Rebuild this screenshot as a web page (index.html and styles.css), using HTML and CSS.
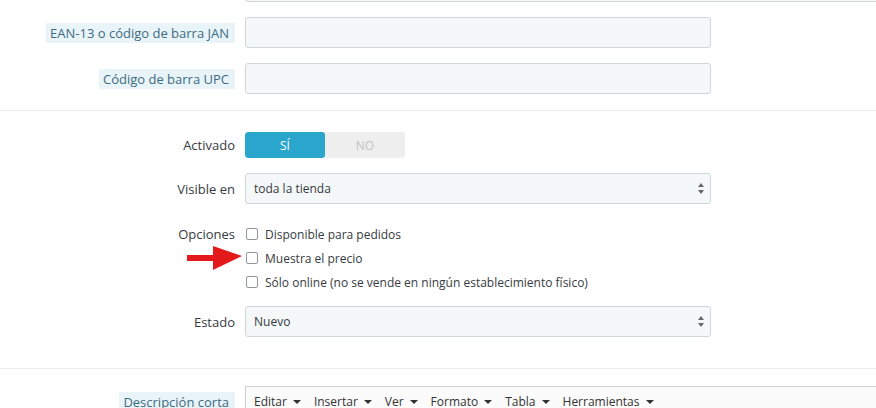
FILE: index.html
```html
<!DOCTYPE html>
<html lang="es">
<head>
<meta charset="utf-8">
<title>Producto</title>
<link rel="stylesheet" href="styles.css">
</head>
<body>
<div class="page">
  <section class="section section-first">
    <div class="row">
      <div class="label"></div>
      <div class="input input-wide"></div>
    </div>
    <div class="row">
      <div class="label"><span class="hint">EAN-13 o código de barra JAN</span></div>
      <div class="input"></div>
    </div>
    <div class="row">
      <div class="label"><span class="hint">Código de barra UPC</span></div>
      <div class="input"></div>
    </div>
  </section>

  <section class="section section-mid">
    <div class="row row-toggle">
      <div class="label">Activado</div>
      <div class="switch">
        <span class="switch-on">SÍ</span>
        <span class="switch-off">NO</span>
      </div>
    </div>
    <div class="row row-visible">
      <div class="label">Visible en</div>
      <div class="input select">
        <span class="select-text">toda la tienda</span>
        <svg class="select-arrows" width="6" height="11" viewBox="0 0 6 11"><path d="M3 0 L6 4 L0 4 Z M0 7 L6 7 L3 11 Z" fill="#666"/></svg>
      </div>
    </div>
    <div class="row row-options">
      <div class="label label-top">Opciones</div>
      <div class="checks">
        <label class="check"><span class="box"></span>Disponible para pedidos</label>
        <label class="check"><span class="box"></span>Muestra el precio</label>
        <label class="check"><span class="box"></span>Sólo online (no se vende en ningún establecimiento físico)</label>
      </div>
      <svg class="arrow" width="60" height="28" viewBox="0 0 60 28"><path d="M2 11 L28 11 L28 2 L57 12 L28 26 L28 17 L2 17 Z" fill="#e3191c"/></svg>
    </div>
    <div class="row">
      <div class="label">Estado</div>
      <div class="input select">
        <span class="select-text">Nuevo</span>
        <svg class="select-arrows" width="6" height="11" viewBox="0 0 6 11"><path d="M3 0 L6 4 L0 4 Z M0 7 L6 7 L3 11 Z" fill="#666"/></svg>
      </div>
    </div>
  </section>

  <section class="section section-last">
    <div class="row row-desc">
      <div class="label label-top"><span class="hint">Descripción corta</span></div>
      <div class="toolbar">
        <span class="menu">Editar<i class="caret"></i></span>
        <span class="menu">Insertar<i class="caret"></i></span>
        <span class="menu">Ver<i class="caret"></i></span>
        <span class="menu">Formato<i class="caret"></i></span>
        <span class="menu">Tabla<i class="caret"></i></span>
        <span class="menu">Herramientas<i class="caret"></i></span>
      </div>
    </div>
  </section>
</div>
</body>
</html>
```

FILE: styles.css
```css
html, body {
  margin: 0;
  padding: 0;
  background: #fff;
  overflow: hidden;
}
body {
  font-family: "Open Sans", "Liberation Sans", sans-serif;
  font-size: 12px;
  color: #363a41;
  width: 876px;
  height: 408px;
}
.page {
  margin-top: -29px;
}
.section {
  border-bottom: 1px solid #eaedef;
}
.section-first {
  padding-bottom: 1px;
}
.section-mid {
  padding-top: 21px;
  padding-bottom: 16px;
}
.section-last {
  border-bottom: none;
  padding-top: 17px;
}
.row {
  display: grid;
  grid-template-columns: 235px 466px;
  column-gap: 10px;
  align-items: center;
  margin-bottom: 15px;
  position: relative;
}
.label {
  text-align: right;
  color: #363a41;
  font-size: 13px;
  line-height: 20px;
}
.label-top {
  align-self: start;
}
.hint {
  display: inline-block;
  background: #e9f4f9;
  color: #3d6b82;
  padding: 0 6px 0 4px;
  line-height: 20px;
}
.input {
  height: 29px;
  border: 1px solid #cfd6d9;
  border-radius: 3px;
  background: #f5f8f9;
  box-sizing: content-box;
}
.input-wide {
  width: 660px;
}
.select {
  display: flex;
  align-items: center;
  justify-content: space-between;
  padding: 0 6px 0 8px;
  height: 29px;
  width: auto;
}
.select-text {
  color: #363a41;
}
.select-arrows {
  display: block;
}
.row-toggle {
  margin-bottom: 15px;
}
.switch {
  display: flex;
  width: 160px;
  height: 26px;
  border-radius: 3px;
  overflow: hidden;
}
.switch-on, .switch-off {
  flex: 1;
  display: flex;
  align-items: center;
  justify-content: center;
  font-size: 12px;
}
.switch-on {
  background: #2aa5cc;
  color: #fff;
  border-radius: 3px;
}
.switch-off {
  background: #eeeeee;
  color: #c4c4c4;
}
.row-visible {
  margin-bottom: 18px;
}
.row-options {
  margin-bottom: 12px;
}
.row-options .label {
  line-height: 24px;
}
.checks {
  display: flex;
  flex-direction: column;
}
.check {
  display: flex;
  align-items: center;
  height: 24px;
  padding-left: 1px;
}
.box {
  width: 10px;
  height: 10px;
  border: 1px solid #8f9599;
  border-radius: 2px;
  background: #fff;
  margin-right: 7px;
}
.arrow {
  position: absolute;
  left: 185px;
  top: 22px;
}
.row-desc {
  grid-template-columns: 235px 1fr;
}
.row-desc .label {
  padding-top: 6px;
}
.toolbar {
  border-top: 1px solid #cfcfcf;
  border-left: 1px solid #cfcfcf;
  background: #fbfbfb;
  height: 40px;
  padding: 6px 0 0 8px;
  display: flex;
  align-items: flex-start;
  margin-right: -10px;
  color: #333;
}
.menu {
  display: inline-flex;
  align-items: center;
  line-height: 18px;
  margin-right: 13px;
}
.caret {
  display: inline-block;
  width: 0;
  height: 0;
  border-left: 4px solid transparent;
  border-right: 4px solid transparent;
  border-top: 4px solid #333;
  margin-left: 6px;
}
```
